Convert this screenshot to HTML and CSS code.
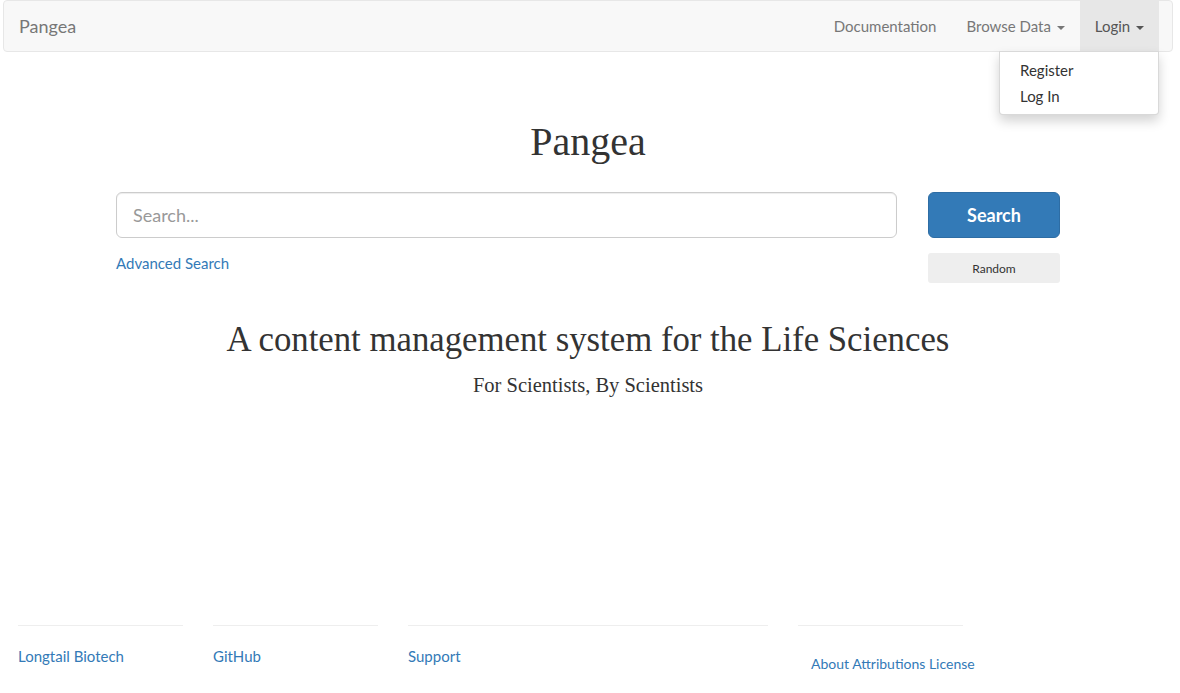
FILE: index.html
```html
<!DOCTYPE html>
<html lang="en">
<head>
<meta charset="utf-8">
<title>Pangea</title>
<link rel="stylesheet" href="styles.css">
</head>
<body>
<div class="page">
  <nav class="navbar">
    <a class="brand" href="#">Pangea</a>
    <ul class="nav">
      <li><a href="#">Documentation</a></li>
      <li><a href="#">Browse Data <span class="caret"></span></a></li>
      <li class="open">
        <a href="#">Login <span class="caret"></span></a>
        <ul class="dropdown">
          <li><a href="#">Register</a></li>
          <li><a href="#">Log In</a></li>
        </ul>
      </li>
    </ul>
  </nav>

  <main class="main">
    <h1 class="title">Pangea</h1>
    <div class="search-row">
      <div class="search-col">
        <input class="search-input" type="text" placeholder="Search...">
        <a class="adv-link" href="#">Advanced Search</a>
      </div>
      <div class="btn-col">
        <button class="btn-search">Search</button>
        <button class="btn-random">Random</button>
      </div>
    </div>
    <h2 class="tagline">A content management system for the Life Sciences</h2>
    <p class="subtitle">For Scientists, By Scientists</p>
  </main>

  <footer class="footer">
    <div class="fcol"><hr><a href="#">Longtail Biotech</a></div>
    <div class="fcol"><hr><a href="#">GitHub</a></div>
    <div class="fcol wide"><hr><a href="#">Support</a></div>
    <div class="fcol"><hr><a class="lower" href="#">About Attributions License</a></div>
  </footer>
</div>
</body>
</html>
```

FILE: styles.css
```css
* { box-sizing: border-box; }
html, body { margin: 0; padding: 0; }
body {
  font-family: Lato, "Open Sans", sans-serif;
  font-size: 15px;
  line-height: 1.42857;
  color: #333;
  background: #fff;
}
a { text-decoration: none; color: #337ab7; }

.page {
  width: 1170px;
  margin-left: 3px;
  min-height: 693px;
  display: flex;
  flex-direction: column;
}

/* navbar */
.navbar {
  height: 52px;
  background: #f8f8f8;
  border: 1px solid #e7e7e7;
  border-radius: 4px;
  display: flex;
  align-items: stretch;
  justify-content: space-between;
  padding: 0 13px 0 15px;
}
.brand {
  font-size: 18px;
  line-height: 20px;
  padding: 15px 0;
  color: #777;
}
.nav {
  list-style: none;
  margin: 0;
  padding: 0;
  display: flex;
}
.nav > li { position: relative; }
.nav > li > a {
  display: block;
  padding: 15px;
  line-height: 20px;
  color: #777;
}
.nav > li.open > a { background: #e7e7e7; color: #555; }
.caret {
  display: inline-block;
  width: 0;
  height: 0;
  margin-left: 2px;
  vertical-align: middle;
  border-top: 4px solid;
  border-left: 4px solid transparent;
  border-right: 4px solid transparent;
}
.dropdown {
  position: absolute;
  top: 100%;
  right: 0;
  min-width: 160px;
  list-style: none;
  margin: 0;
  padding: 5px 0;
  background: #fff;
  border: 1px solid rgba(0,0,0,0.15);
  border-radius: 0 0 4px 4px;
  box-shadow: 0 6px 12px rgba(0,0,0,0.175);
  z-index: 10;
}
.dropdown a {
  display: block;
  padding: 3px 20px;
  line-height: 20px;
  color: #333;
  white-space: nowrap;
}

/* main */
.main {
  flex: 1;
  display: flex;
  flex-direction: column;
  align-items: center;
}
.title {
  font-family: "Liberation Serif", serif;
  font-weight: 400;
  font-size: 40px;
  line-height: 44px;
  margin: 68px 0 0;
  color: #333;
}
.search-row {
  display: flex;
  gap: 31px;
  margin-top: 28px;
}
.search-col { width: 781px; display: flex; flex-direction: column; }
.btn-col { width: 132px; display: flex; flex-direction: column; gap: 15px; }
.search-input {
  height: 46px;
  padding: 10px 16px;
  font-family: Lato, sans-serif;
  font-size: 18px;
  border: 1px solid #ccc;
  border-radius: 6px;
  box-shadow: inset 0 1px 1px rgba(0,0,0,0.075);
  color: #555;
  outline: none;
}
.search-input::placeholder { color: #999; }
.adv-link { margin-top: 15px; line-height: 21px; align-self: flex-start; }
.btn-search {
  height: 46px;
  font-family: Lato, sans-serif;
  font-size: 18px;
  font-weight: 700;
  color: #fff;
  background: #337ab7;
  border: 1px solid #2e6da4;
  border-radius: 6px;
}
.btn-random {
  height: 30px;
  font-family: Lato, sans-serif;
  font-size: 12px;
  color: #333;
  background: #eee;
  border: none;
  border-radius: 3px;
}
.tagline {
  font-family: "Liberation Serif", serif;
  font-weight: 400;
  font-size: 34.75px;
  line-height: 40px;
  margin: 37px 0 0;
  color: #333;
}
.subtitle {
  font-family: "Liberation Serif", serif;
  font-size: 20.5px;
  line-height: 26px;
  margin: 12px 0 0;
  color: #333;
}

/* footer */
.footer {
  display: grid;
  grid-template-columns: 195px 195px 390px 195px;
  padding-bottom: 19px;
}
.fcol { padding: 0 15px; }
.fcol hr {
  margin: 20px 0;
  border: 0;
  border-top: 1px solid #eee;
}
.fcol a { display: block; line-height: 21px; white-space: nowrap; }
.fcol a.lower { padding: 7px 0 0 13px; font-size: 14px; }
```
